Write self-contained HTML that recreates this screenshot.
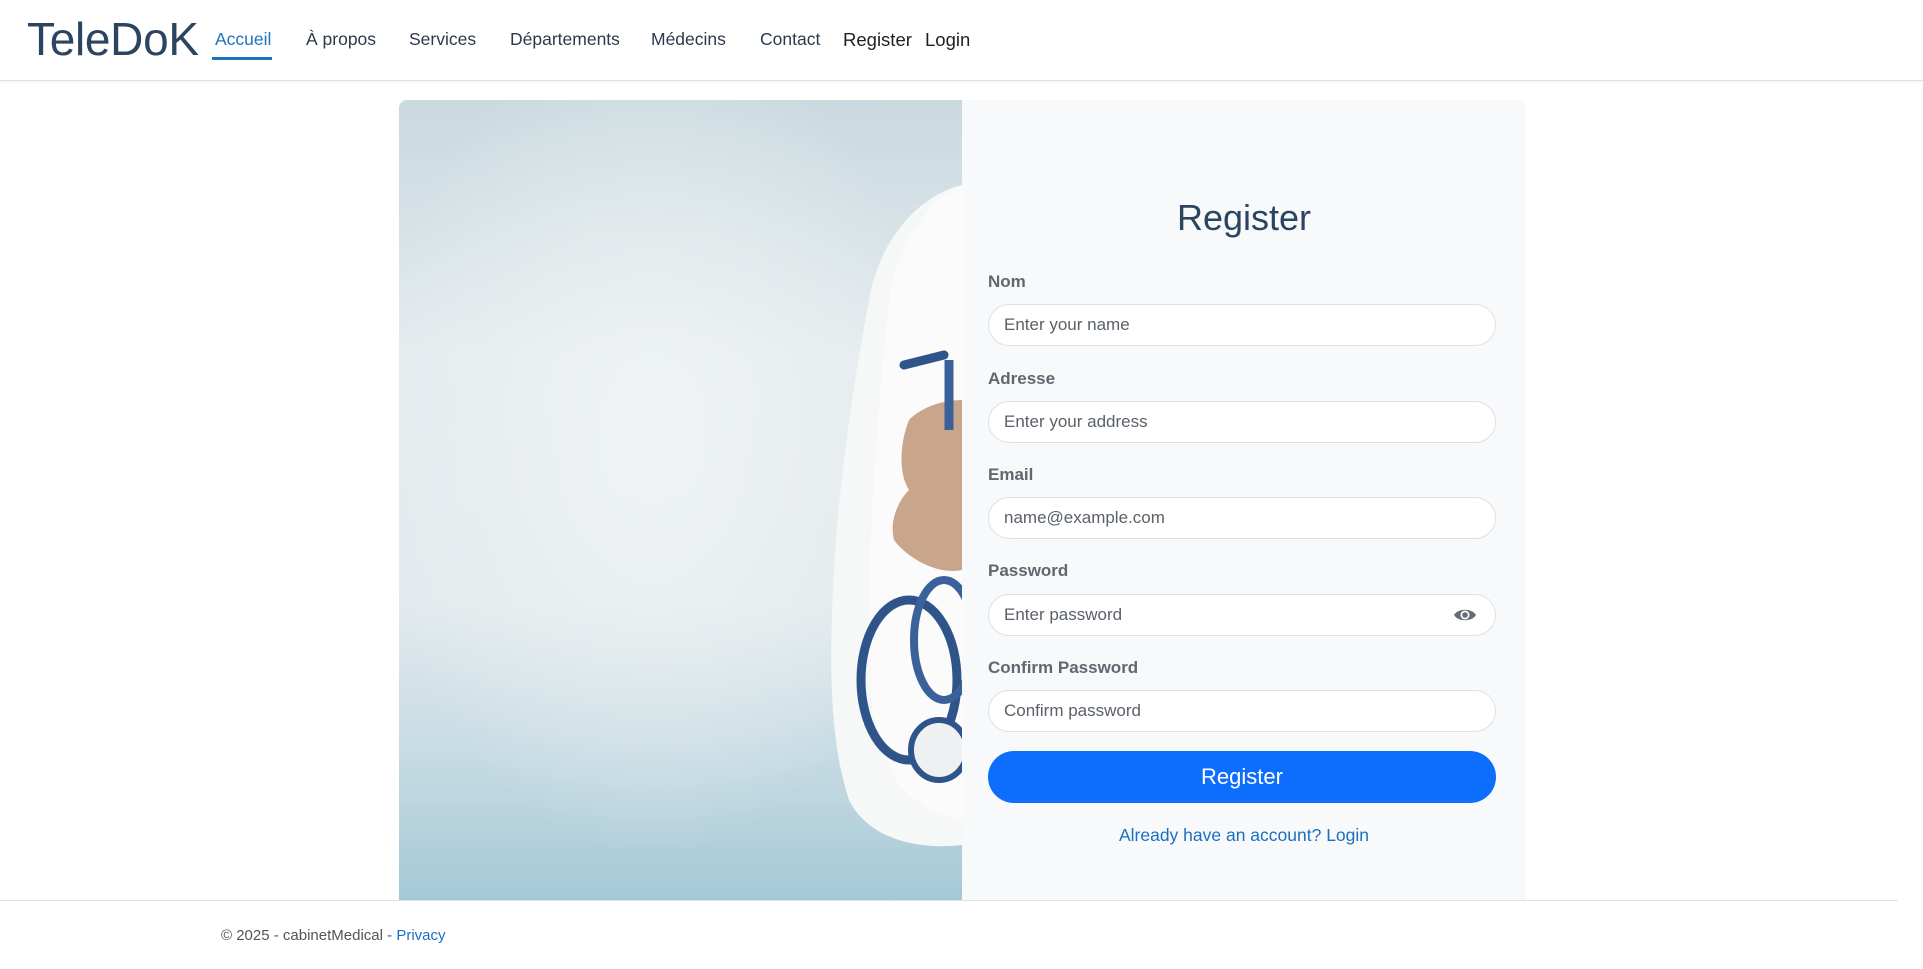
<!DOCTYPE html>
<html><head><meta charset="utf-8"><style>
*{box-sizing:border-box;margin:0;padding:0}
body{width:1923px;height:969px;background:#fff;font-family:"Liberation Sans",sans-serif;position:relative;overflow:hidden}
.nav{position:absolute;left:0;top:0;width:1923px;height:81px;border-bottom:1px solid #dfe2e5;box-shadow:0 2px 4px rgba(0,0,0,.04)}
.logo{position:absolute;left:27px;top:12px;font-size:46px;color:#2b4560;letter-spacing:-.3px}
.nav a{position:absolute;top:29px;font-size:17.5px;color:#2b3a4a;text-decoration:none}
.nav a.act{color:#1e73be}
.ul{position:absolute;left:212px;top:57px;width:60px;height:3px;background:#1e73be}
.card{position:absolute;left:399px;top:100px;width:1127px;height:840px;border-radius:8px;overflow:hidden;background:#f8f9fa}
.img{position:absolute;left:0;top:0;width:563px;height:840px}
.title{position:absolute;left:962px;width:564px;top:197px;text-align:center;font-size:36px;color:#2b4560}
label{position:absolute;left:988px;font-size:17px;font-weight:bold;color:#5f6770}
.in{position:absolute;left:988px;width:508px;height:42px;border:1px solid #dde1e5;border-radius:21px;background:#fff;font-size:17px;color:#5a6168;padding-left:15px;line-height:40px}
.btn{position:absolute;left:988px;top:751px;width:508px;height:52px;border-radius:26px;background:#0d6efd;color:#fff;font-size:22px;text-align:center;line-height:52px}
.link{position:absolute;left:962px;width:564px;top:825px;text-align:center;font-size:17.5px;color:#1a6fc4}
.foot{position:absolute;left:0;top:900px;width:1898px;height:69px;border-top:1px solid #dfe2e5;background:#fff}
.foot p{position:absolute;left:221px;top:26px;font-size:15px;color:#555}
.foot span{color:#1a6fc4}
</style></head><body>
<div class="nav">
<div class="logo">TeleDoK</div>
<a class="act" style="left:215px">Accueil</a>
<div class="ul"></div>
<a style="left:306px">À propos</a>
<a style="left:409px">Services</a>
<a style="left:510px">Départements</a>
<a style="left:651px">Médecins</a>
<a style="left:760px">Contact</a>
<a style="left:843px;font-size:18.5px;color:#222">Register</a>
<a style="left:925px;font-size:18.5px;color:#222">Login</a>
</div>
<div class="card">
<svg class="img" viewBox="0 0 563 840" width="563" height="840">
<defs>
<linearGradient id="g" x1="0" y1="0" x2="0" y2="1">
<stop offset="0" stop-color="#c9d9df"/><stop offset=".3" stop-color="#e4ebee"/><stop offset=".6" stop-color="#e3eaed"/><stop offset=".78" stop-color="#c6dbe3"/><stop offset="1" stop-color="#9cc3d3"/></linearGradient>
<radialGradient id="r" cx=".45" cy=".4" r=".5"><stop offset="0" stop-color="#f2f5f5" stop-opacity=".8"/><stop offset="1" stop-color="#f2f5f5" stop-opacity="0"/></radialGradient>
</defs>
<rect width="563" height="840" fill="url(#g)"/>
<rect width="563" height="840" fill="url(#r)"/>
<path d="M563 85 C520 95 480 140 470 200 C455 280 440 380 435 470 C430 560 430 640 450 700 C470 740 520 750 563 745 Z" fill="#f6f7f7"/>
<path d="M563 85 C530 100 500 140 490 200 C480 300 470 420 470 520 C470 640 480 700 563 720 Z" fill="#fbfbfb"/>
<path d="M510 320 C530 300 560 300 563 300 L563 470 C540 475 510 460 495 440 C490 420 500 400 510 390 C500 375 500 345 510 320Z" fill="#c9a58c"/>
<ellipse cx="510" cy="580" rx="48" ry="80" fill="none" stroke="#2f548a" stroke-width="9"/>
<ellipse cx="545" cy="540" rx="30" ry="60" fill="none" stroke="#3b619a" stroke-width="8"/>
<ellipse cx="540" cy="650" rx="28" ry="30" fill="#eef0f2" stroke="#2f548a" stroke-width="6"/>
<path d="M505 265 L545 255" stroke="#2f548a" stroke-width="9" stroke-linecap="round"/>
<path d="M550 260 L550 330" stroke="#3b619a" stroke-width="9"/>
</svg>
<div style="position:absolute;left:563px;top:0;width:564px;height:840px;background:#f8f9fa"></div>
</div>
<div class="title">Register</div>
<label style="top:272px">Nom</label>
<div class="in" style="top:304px">Enter your name</div>
<label style="top:369px">Adresse</label>
<div class="in" style="top:401px">Enter your address</div>
<label style="top:465px">Email</label>
<div class="in" style="top:497px">name@example.com</div>
<label style="top:561px">Password</label>
<div class="in" style="top:594px">Enter password
<svg style="position:absolute;right:18px;top:12px" width="24" height="16" viewBox="0 0 24 16"><path d="M1 8 C5 1 19 1 23 8 C19 15 5 15 1 8Z" fill="#666d75"/><circle cx="12" cy="8" r="4.5" fill="#fff"/><circle cx="12" cy="8" r="2.8" fill="#666d75"/></svg></div>
<label style="top:658px">Confirm Password</label>
<div class="in" style="top:690px">Confirm password</div>
<div class="btn">Register</div>
<div class="link">Already have an account? Login</div>
<div class="foot"><p>© 2025 - cabinetMedical - <span>Privacy</span></p></div>
</body></html>
